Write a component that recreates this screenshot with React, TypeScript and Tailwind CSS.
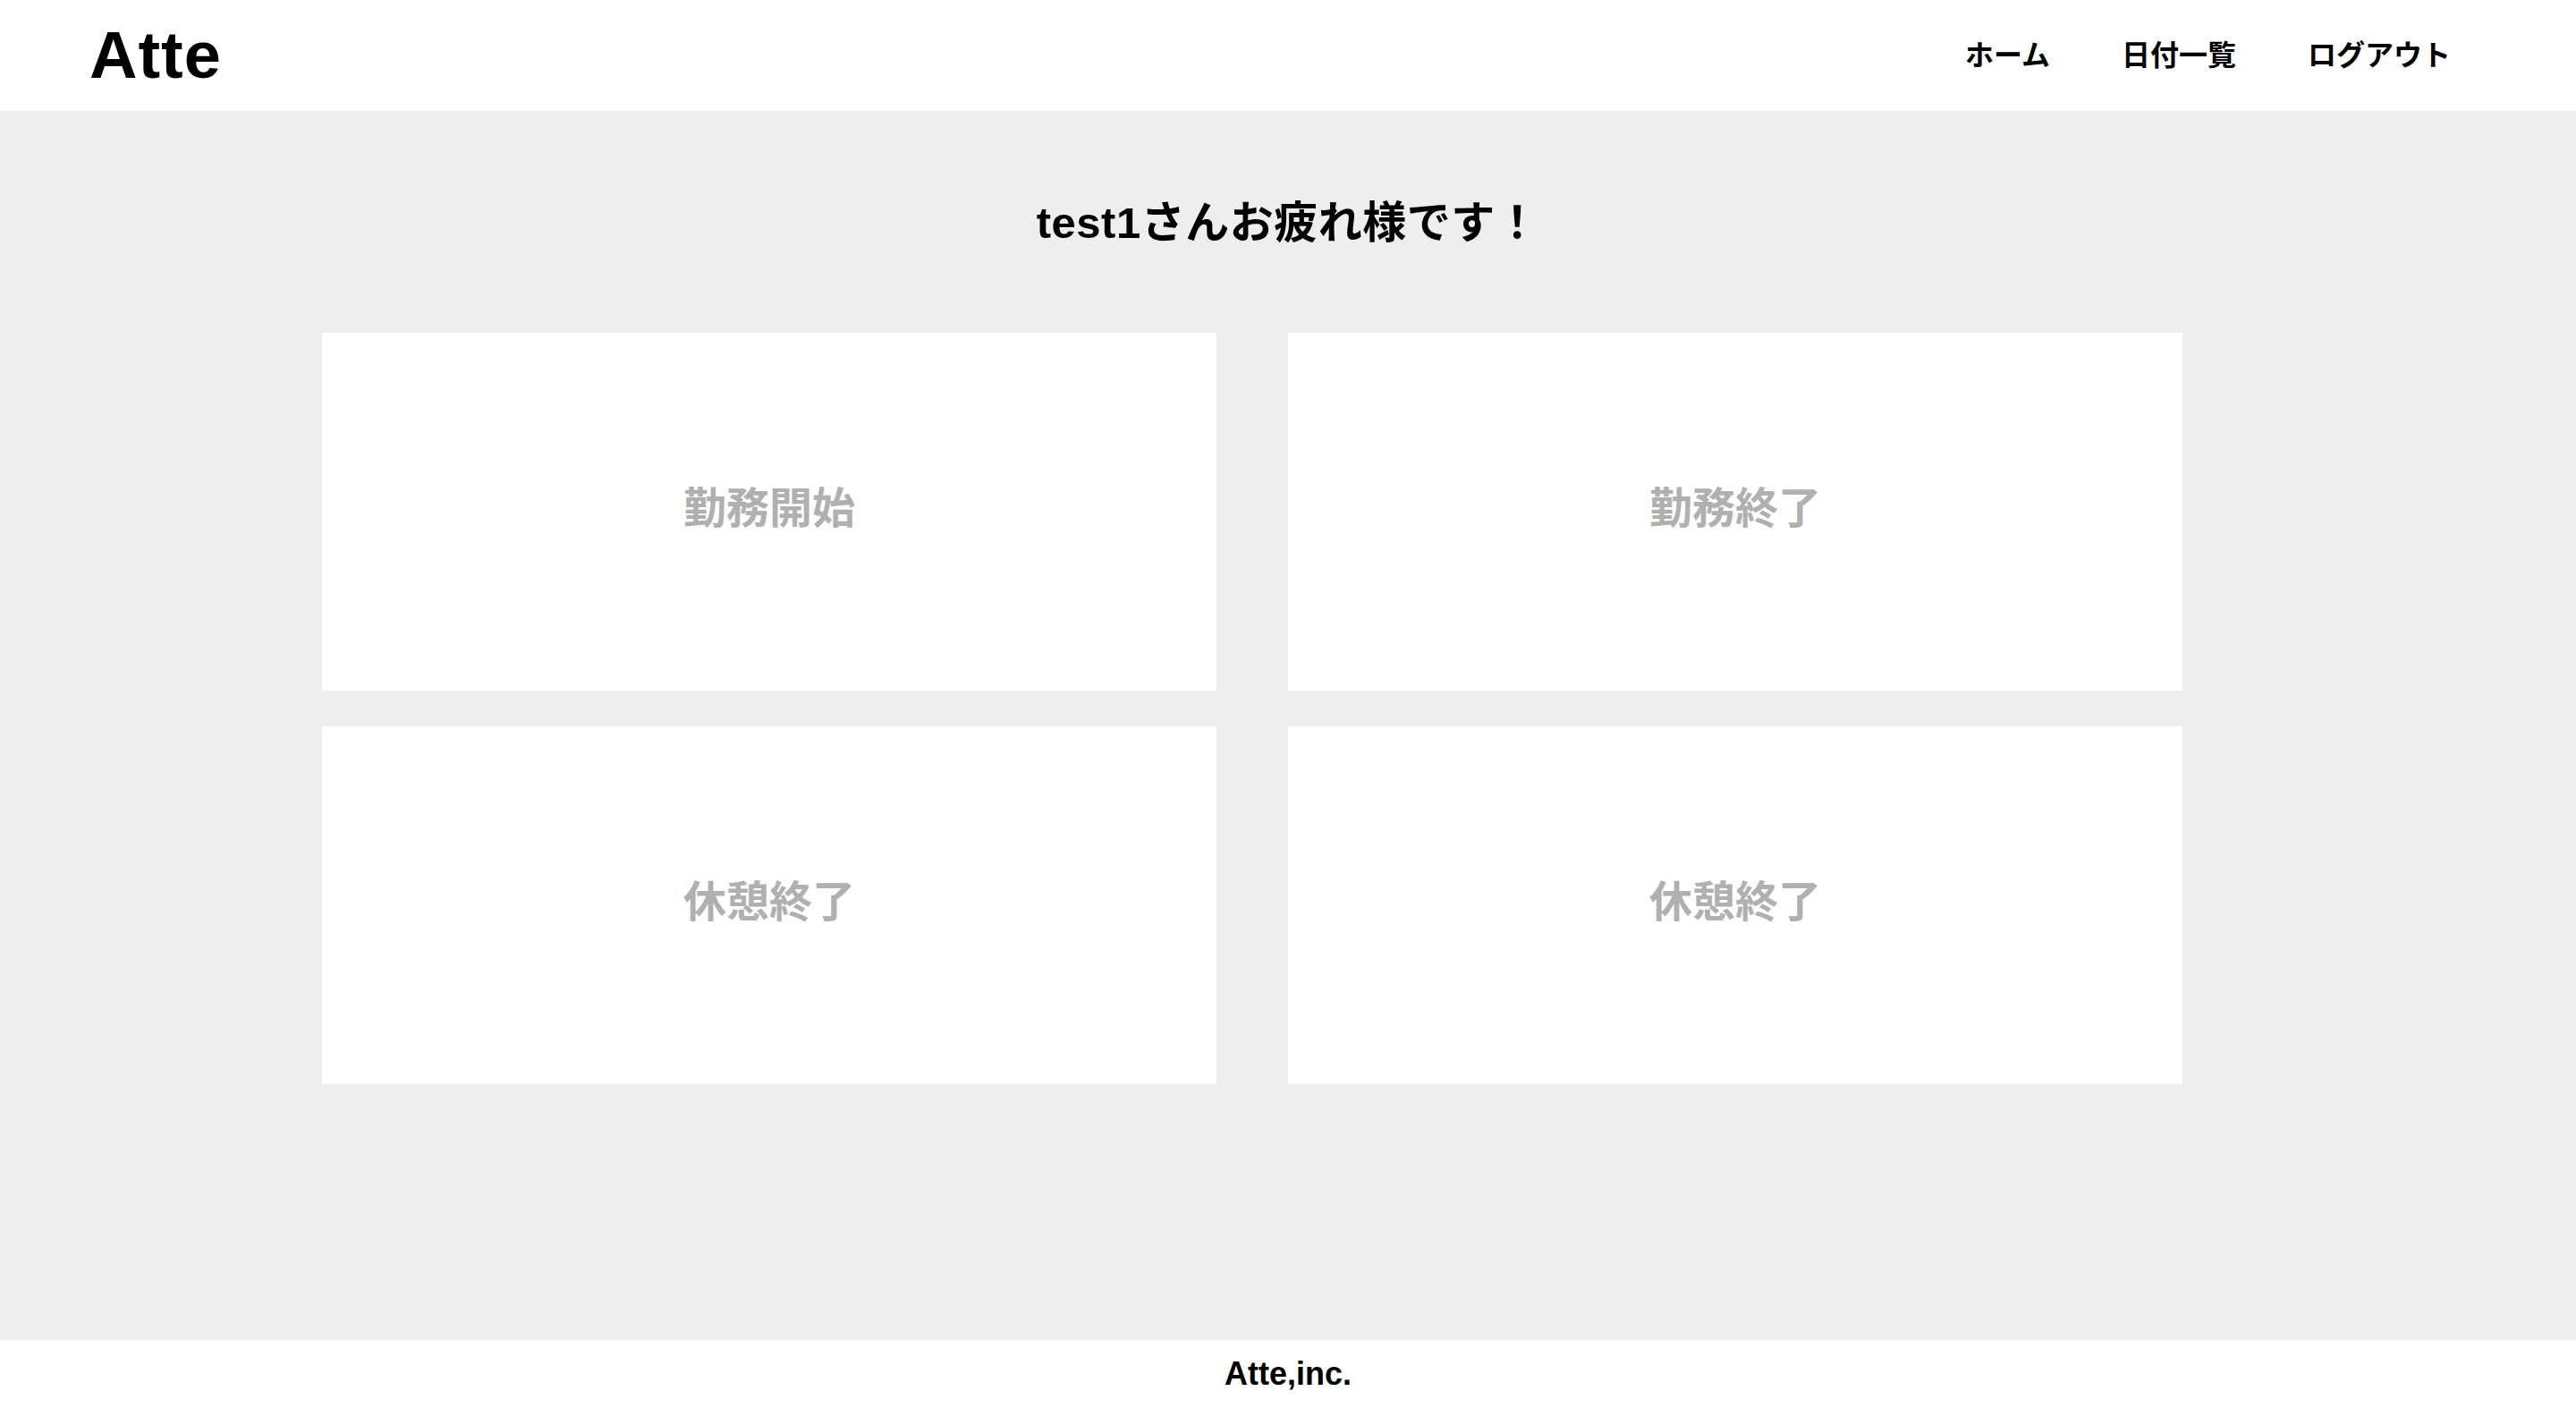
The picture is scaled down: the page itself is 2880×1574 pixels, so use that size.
const cards = ["勤務開始", "勤務終了", "休憩終了", "休憩終了"];

const jp = { fontFamily: '"Liberation Sans", "Noto Sans CJK JP", sans-serif' };

export default function App() {
    return (
        <div className="flex min-h-screen flex-col bg-[#eeeeee]" style={jp}>
            <header className="flex h-[124px] items-center justify-between bg-white pl-[100px] pr-[140px]">
                <h1 className="text-[74px] leading-none font-bold tracking-[1px] text-black">Atte</h1>
                <nav className="flex gap-[80px] text-[32px] font-bold text-black">
                    <a href="#">ホーム</a>
                    <a href="#">日付一覧</a>
                    <a href="#">ログアウト</a>
                </nav>
            </header>
            <main className="flex-1 pt-[101px]">
                <h2 className="text-center text-[49px] leading-none font-bold tracking-[0.5px] text-black">
                    test1さんお疲れ様です！
                </h2>
                <div className="mt-[98px] ml-[360px] grid w-[2080px] grid-cols-2 gap-x-[80px] gap-y-[40px]">
                    {cards.map((label, i) => (
                        <button
                            key={i}
                            className="flex h-[400px] items-center justify-center bg-white pb-[6px] text-[48px] font-bold text-[#b0b0b0]"
                        >
                            {label}
                        </button>
                    ))}
                </div>
            </main>
            <footer className="flex h-[76px] items-center justify-center bg-white">
                <small className="text-[36px] font-bold text-black">Atte,inc.</small>
            </footer>
        </div>
    );
}
